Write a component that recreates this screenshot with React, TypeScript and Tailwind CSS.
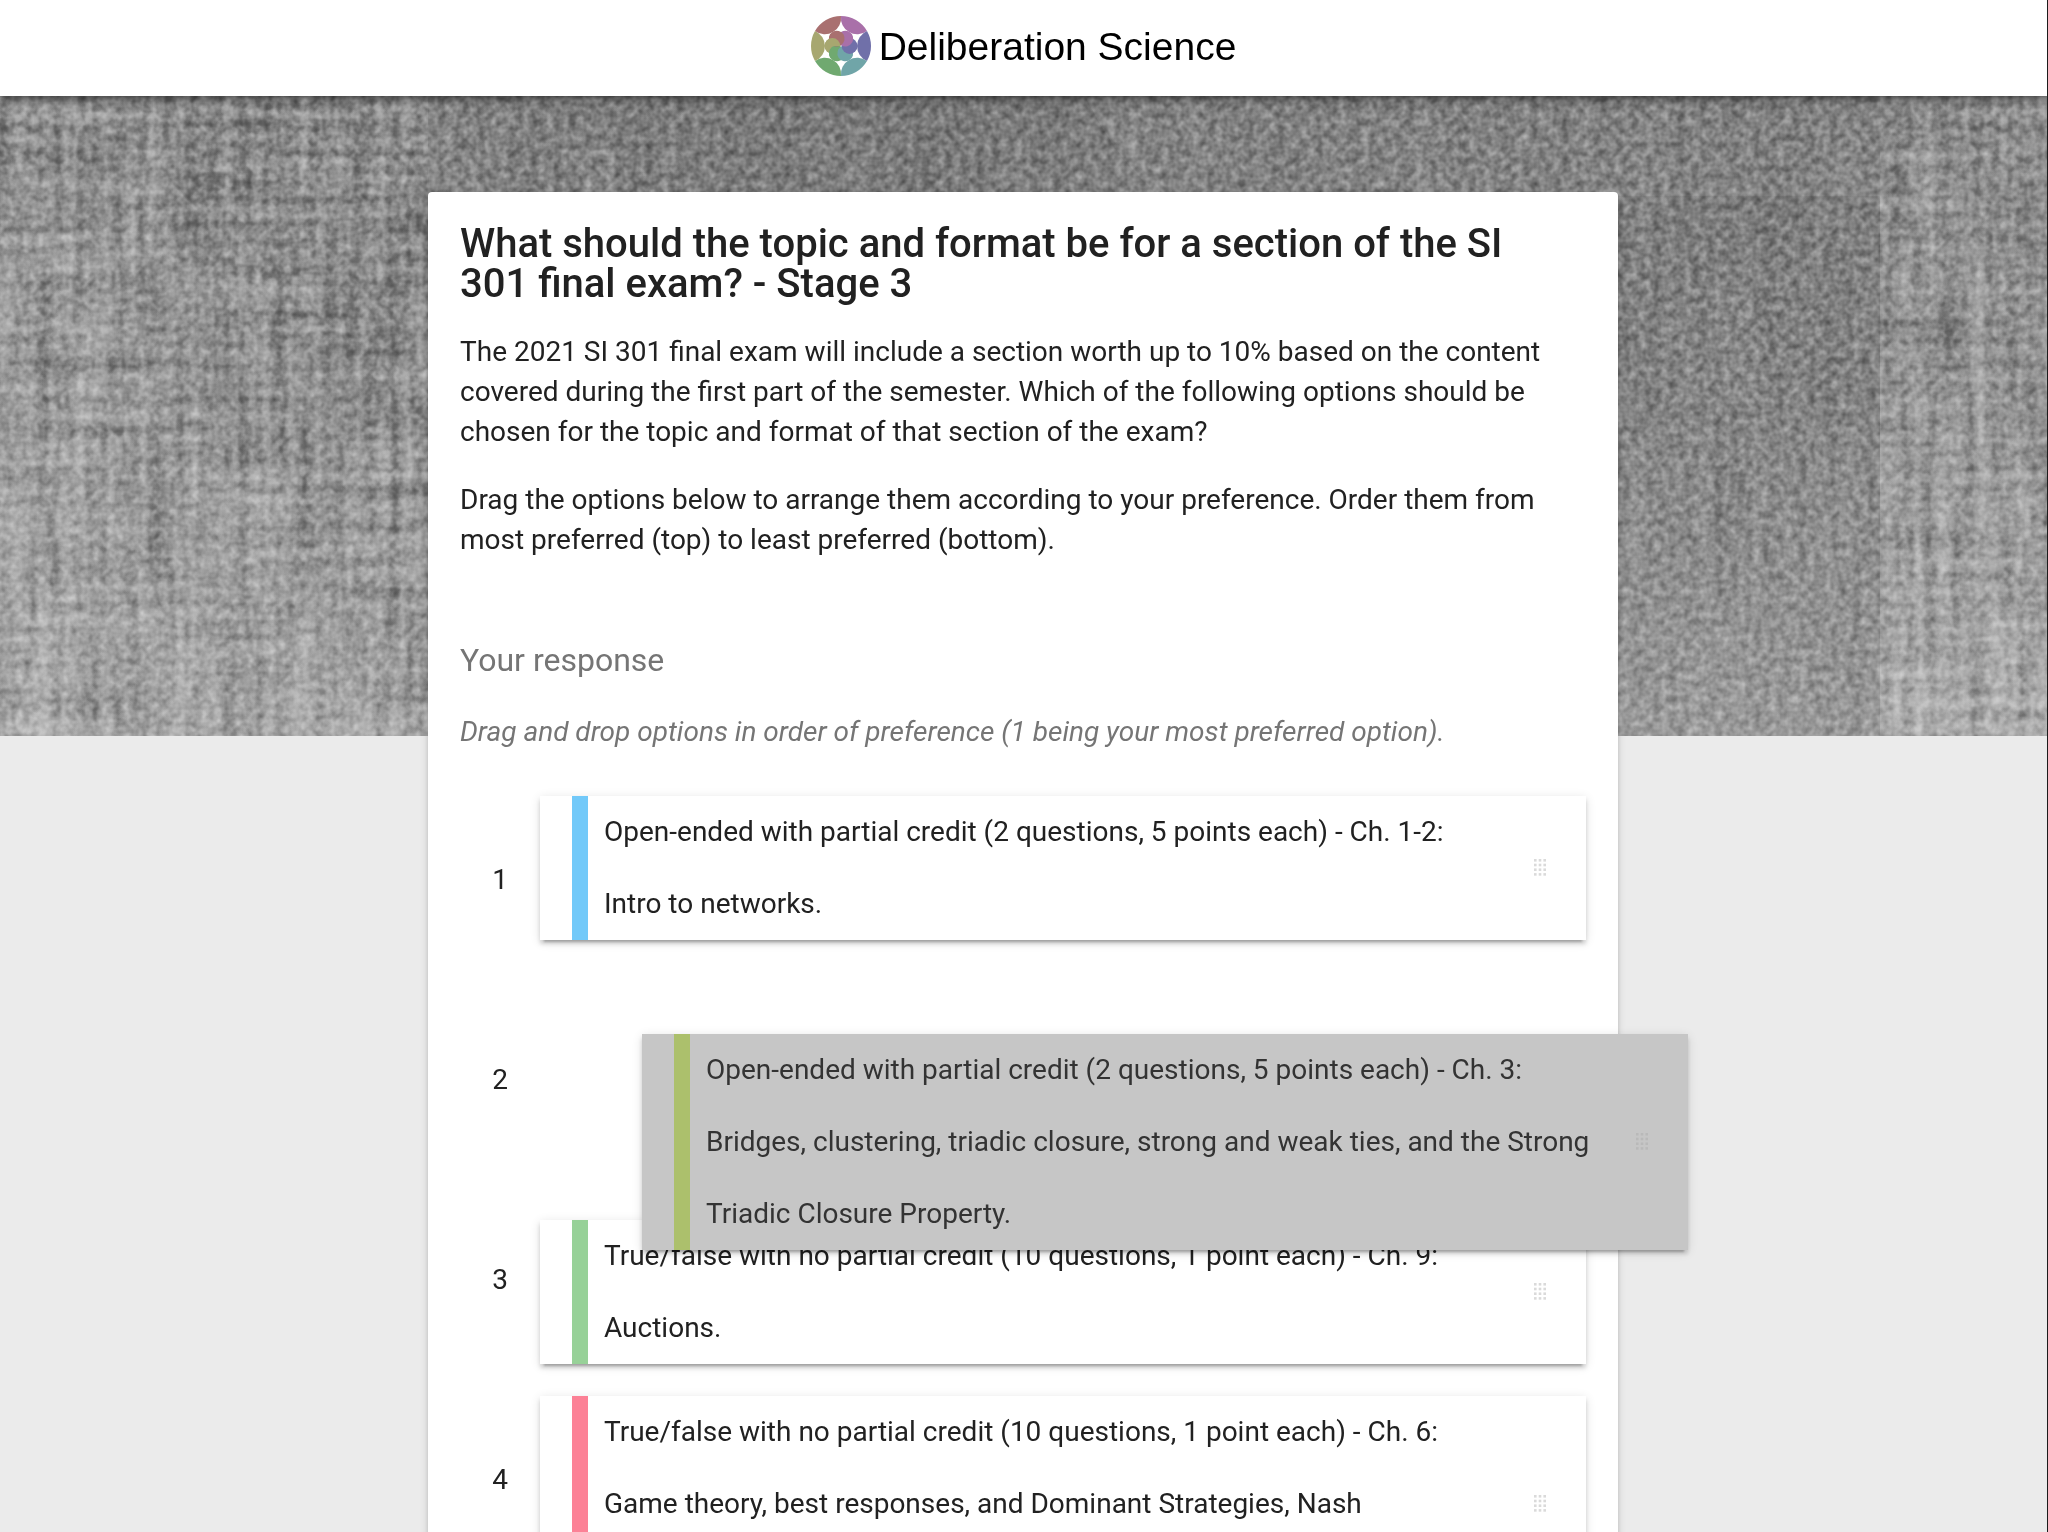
const OPTIONS = [
  {
    bar: "bg-[#72c9f9]",
    text: "Open-ended with partial credit (2 questions, 5 points each) - Ch. 1-2: Intro\u00a0to\u00a0networks.",
  },
  {
    bar: "bg-[#acc06c]",
    dragging: true,
    text: "Open-ended with partial credit (2 questions, 5 points each) - Ch. 3: Bridges, clustering, triadic closure, strong and weak ties, and the Strong Triadic Closure Property.",
  },
  {
    bar: "bg-[#97d198]",
    text: "True/false with no partial credit (10 questions, 1 point each) - Ch. 9: Auctions.",
  },
  {
    bar: "bg-[#fc8196]",
    text: "True/false with no partial credit (10 questions, 1 point each) - Ch. 6: Game theory, best responses, and Dominant Strategies, Nash Equilibria\u00a0and\u00a0mixed\u00a0strategies.",
  },
];

const CARD_SHADOW =
  "shadow-[0_4px_4px_0_rgba(0,0,0,0.14),0_6px_2px_-4px_rgba(0,0,0,0.2),0_2px_10px_0_rgba(0,0,0,0.12)]";

/* Clockwise from the top right. */
const PETALS = ["#a970a9", "#7070a9", "#70a5a8", "#70a970", "#a7a770", "#a97070"];

/* Each lobe lies over its clockwise neighbour; the olive one starts the stack. */
const LOBE_ORDER = [4, 3, 2, 1, 0, 5];

function Logo() {
  return (
    <svg viewBox="-30 -30 60 60" className="size-15" aria-hidden="true">
      <defs>
        <clipPath id="upper-half">
          <rect x="-30" y="-30" width="60" height="30" />
        </clipPath>
      </defs>
      {PETALS.map((c, i) => (
        <path
          key={c}
          transform={`rotate(${i * 60})`}
          d="M0 -30A30 30 0 0 1 25.98 -15A16.3 16.3 0 0 1 0 -30Z"
          fill={c}
        />
      ))}
      {LOBE_ORDER.map((i) => (
        <circle
          key={i}
          transform={`rotate(${i * 60 + 30})`}
          cx="0"
          cy="-8.6"
          r="7.9"
          fill={PETALS[i]}
        />
      ))}
      <g clipPath="url(#upper-half)">
        <circle cx="-8.6" cy="0" r="7.9" fill={PETALS[4]} />
      </g>
    </svg>
  );
}

function Fabric() {
  return (
    <svg
      className="absolute inset-x-0 top-0 h-[640px] w-full"
      preserveAspectRatio="none"
      aria-hidden="true"
    >
      <defs>
        <linearGradient id="tone" x1="0" y1="0" x2="0" y2="1">
          <stop offset="0" stopColor="#797979" />
          <stop offset="0.5" stopColor="#848484" />
          <stop offset="1" stopColor="#999999" />
        </linearGradient>
        <linearGradient id="light" x1="0" y1="0" x2="1" y2="0">
          <stop offset="0" stopColor="#fff" stopOpacity="0.16" />
          <stop offset="1" stopColor="#fff" stopOpacity="0" />
        </linearGradient>
        <filter id="grain" x="0" y="0" width="100%" height="100%" colorInterpolationFilters="sRGB">
          <feTurbulence type="fractalNoise" baseFrequency="0.13" numOctaves="2" seed="4" />
          <feColorMatrix values="0.9 0 0 0 0.05 0.9 0 0 0 0.05 0.9 0 0 0 0.05 0 0 0 0 1" />
        </filter>
        <filter id="warp" x="0" y="0" width="100%" height="100%" colorInterpolationFilters="sRGB">
          <feTurbulence type="fractalNoise" baseFrequency="0.08 0.006" numOctaves="2" seed="9" />
          <feColorMatrix values="1 0 0 0 0 1 0 0 0 0 1 0 0 0 0 0 0 0 0 1" />
        </filter>
        <filter id="weft" x="0" y="0" width="100%" height="100%" colorInterpolationFilters="sRGB">
          <feTurbulence type="fractalNoise" baseFrequency="0.006 0.08" numOctaves="2" seed="2" />
          <feColorMatrix values="1 0 0 0 0 1 0 0 0 0 1 0 0 0 0 0 0 0 0 1" />
        </filter>
      </defs>
      <rect width="100%" height="100%" fill="url(#tone)" />
      <rect width="700" height="100%" fill="url(#light)" />
      <path d="M1085 0C1105 40 1125 70 1160 100H1880V0Z" fill="#fff" opacity="0.06" />
      <rect x="1880" width="700" height="100%" fill="url(#light)" />
      <g className="mix-blend-overlay" opacity="0.5">
        <rect width="100%" height="100%" filter="url(#grain)" />
      </g>
      <g className="mix-blend-overlay" opacity="0.12">
        <rect width="100%" height="100%" filter="url(#warp)" />
      </g>
      <g className="mix-blend-overlay" opacity="0.22">
        <rect width="428" height="100%" filter="url(#warp)" />
        <rect x="1880" width="200" height="100%" filter="url(#warp)" />
      </g>
      <g className="mix-blend-overlay" opacity="0.28">
        <rect width="428" height="100%" filter="url(#weft)" />
        <rect x="1880" width="200" height="100%" filter="url(#weft)" />
      </g>
    </svg>
  );
}

function DragHandle({ faint }: { faint?: boolean }) {
  return (
    <button type="button" aria-label="Drag to reorder" className="mr-10 shrink-0 cursor-grab">
      <svg
        viewBox="0 0 12 18"
        className={`h-[18px] w-3 ${faint ? "opacity-6" : "opacity-14"}`}
        fill="#000"
      >
        {[0, 1, 2, 3].map((r) =>
          [0, 1, 2].map((c) => (
            <rect key={`${r}-${c}`} x={c * 4.7} y={r * 4.7} width="2.6" height="2.6" />
          )),
        )}
      </svg>
    </button>
  );
}

export default function App() {
  return (
    <div className="flex h-screen flex-col overflow-hidden border-r border-[#1c1c1c] bg-[#ebebeb] font-['Roboto',sans-serif] text-[28px] leading-10 text-[#212121]">
      <header className="relative z-10 flex h-24 shrink-0 items-center justify-center bg-white shadow-[0_4px_10px_0_rgba(0,0,0,0.35),0_2px_4px_0_rgba(0,0,0,0.25)]">
        <a
          href="#"
          className="-mt-1 flex items-center gap-2 font-['Liberation_Sans',sans-serif] text-[39px] leading-none text-black"
        >
          <Logo />
          <span>Deliberation Science</span>
        </a>
      </header>

      <main className="relative flex grow justify-center pt-24 pr-px">
        <Fabric />
        <article
          className={`relative w-full max-w-[1190px] self-start rounded bg-white p-8 pb-16 ${CARD_SHADOW}`}
        >
          <h1 className="text-[40px] leading-10 font-medium">
            What should the topic and format be for a section of the SI 301&nbsp;final exam? -
            Stage 3
          </h1>
          <p className="mt-7">
            The 2021 SI 301 final exam will include a section worth up to 10% based on the content
            covered during the first part of the semester. Which of the following options should be
            chosen for the topic and format of that section of the exam?
          </p>
          <p className="mt-7">
            Drag the options below to arrange them according to your preference. Order them from
            most preferred (top) to least preferred (bottom).
          </p>
          <h2 className="mt-20 text-[32px] leading-10 text-[#757575]">Your response</h2>
          <p className="mt-8 text-[#757575] italic">
            Drag and drop options in order of preference (1 being your most preferred option).
          </p>

          <div className="mt-11 flex">
            <div className="w-20 shrink-0 text-center">
              {OPTIONS.map((o, i) => (
                <div key={o.text} className="mb-8 flex h-42 items-center justify-center">
                  {i + 1}
                </div>
              ))}
            </div>
            <ol className="flex grow flex-col gap-8">
              {OPTIONS.map((o) => (
                <li
                  key={o.text}
                  draggable
                  className={`flex items-center pl-8 ${CARD_SHADOW} ${
                    o.dragging
                      ? "relative top-[62px] left-[102px] z-10 bg-[#c6c6c6] text-[#333]"
                      : "bg-white"
                  }`}
                >
                  <span className={`w-4 shrink-0 self-stretch ${o.bar}`} />
                  <p className="mx-4 grow leading-18">{o.text}</p>
                  <DragHandle faint={o.dragging} />
                </li>
              ))}
            </ol>
          </div>
        </article>
      </main>
    </div>
  );
}
